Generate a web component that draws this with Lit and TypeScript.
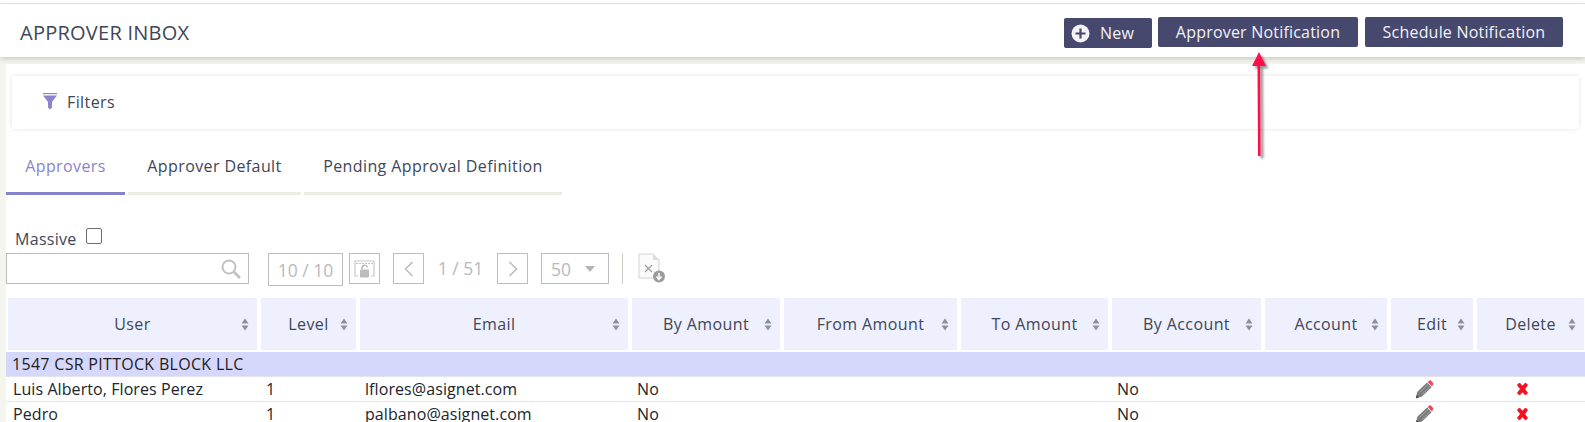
import { LitElement, html, css, svg } from "lit";
import { customElement } from "lit/decorators.js";

const COLS = [
  ["User", 249], ["Level", 95], ["Email", 268], ["By Amount", 148], ["From Amount", 173],
  ["To Amount", 147], ["By Account", 149], ["Account", 122], ["Edit", 82], ["Delete", 107],
] as const;
const ROWS = [
  ["Luis Alberto, Flores Perez", "1", "lflores@asignet.com", "No", "No"],
  ["Pedro", "1", "palbano@asignet.com", "No", "No"],
];

const sortIcon = svg`<svg class="sort" width="8" height="13" viewBox="0 0 8 13"><path d="M4 .5 7.5 5.5H.5zM.5 7.5h7L4 12.5z" fill="#8d8f9c"/></svg>`;
const pencil = svg`<svg width="19" height="19" viewBox="0 0 19 19"><path d="M.8 18.2 2.4 11.8 12 2.6 16.6 7.2 7 16.6z" fill="#7b7b7b"/><path d="M4.5 12.5 13 4.5M7 14.5 15 6.5" stroke="#a8a8a8" stroke-width="1"/><path d="M12.6 1.9 14.2.7c.7-.5 1.4-.4 1.9.1l1.9 1.9c.5.6.5 1.2.1 1.8L17 6.5z" fill="#f0485c"/><path d="M.8 18.2 1.6 15 4 17.4z" fill="#4a4a4a"/></svg>`;
const cross = svg`<svg width="15" height="14" viewBox="0 0 15 14"><path d="M2.5 3 4.5 1 7.5 4.2 10.5 1 12.5 3 9.5 7 12.5 11 10.5 13 7.5 9.8 4.5 13 2.5 11 5.5 7z" fill="#f5101f" stroke="#f5101f" stroke-width="1"/></svg>`;

@customElement("app-root")
export class AppRoot extends LitElement {
  static styles = css`
    :host { display: block; width: 1585px; height: 422px; overflow: hidden; position: relative; background: #f5f5ef; font-family: "Open Sans", "Noto Sans", sans-serif; color: #2b2f3a; }
    * { box-sizing: border-box; }
    .top { height: 4px; background: #fff; border-bottom: 1px solid #e6e6e6; }
    header { height: 53px; background: #fff; display: flex; align-items: flex-start; justify-content: space-between; box-shadow: 0 2px 5px rgba(120,120,105,.35); position: relative; padding: 13px 22px 0 20px; }
    h1 { margin: 2px 0 0; font-size: 20px; line-height: 27px; font-weight: 500; letter-spacing: .25px; color: #3e4659; }
    .actions { display: flex; gap: 6px; align-items: flex-start; }
    .btn { height: 30px; background: #46486d; color: #f2f2f8; border-radius: 2px; font-size: 16px; letter-spacing: .2px; display: flex; align-items: center; justify-content: center; }
    .btn.new { width: 88px; margin-top: 1px; gap: 10px; justify-content: flex-start; padding-left: 7px; }
    .btn.a { width: 200px; }
    .btn.s { width: 198px; margin-left: 1px; }
    main { margin: 7px 0 0 6px; height: 358px; background: #fff; padding-top: 12px; }
    .filters { margin: 0 6px; height: 53px; border-radius: 3px; box-shadow: 0 0 4px rgba(120,120,110,.22); display: flex; align-items: center; gap: 10px; padding: 0 0 2px 31px; font-size: 16px; letter-spacing: .4px; color: #3e4659; }
    .tabs { display: flex; margin-top: 21px; height: 45px; }
    .tab { height: 45px; border-bottom: 3px solid #ecece1; font-size: 16px; font-weight: 500; letter-spacing: .4px; color: #3e4659; padding: 4px 0 0; text-align: center; line-height: 24px; }
    .tab.on { color: #8a84cc; border-bottom-color: #8583cb; width: 119px; margin-right: 3px; }
    .tab.d { width: 173px; margin-right: 3px; }
    .tab.p { width: 258px; }
    .massive { display: flex; align-items: flex-start; height: 25px; padding: 0 0 0 9px; margin-top: 33px; font-size: 16px; letter-spacing: .3px; color: #3e4659; line-height: 22px; gap: 9px; }
    .check { width: 16px; height: 16px; border: 1px solid #6d6d6d; border-radius: 2px; background: #fff; }
    .toolbar { display: flex; align-items: flex-start; height: 45px; }
    .box { border: 1px solid #bdbdbd; height: 31px; display: flex; align-items: center; justify-content: center; color: #b9b9b9; font-size: 17.5px; }
    .search { width: 243px; justify-content: flex-end; padding-right: 5px; }
    .count { width: 75px; height: 33px; margin-left: 19px; }
    .lock { width: 31px; margin-left: 6px; }
    .prev { width: 31px; margin-left: 13px; }
    .next { width: 31px; }
    .page { width: 73px; text-align: center; font-size: 17.5px; color: #b9b9b9; line-height: 31px; }
    .size { width: 68px; margin-left: 13px; justify-content: space-between; padding: 0 13px 0 9px; }
    .sep { width: 1px; height: 31px; background: #cfcfbf; margin-left: 13px; }
    .xls { margin-left: 15px; }
    .grid { display: grid; grid-template-columns: 249px 95px 268px 148px 173px 147px 149px 122px 82px 107px; column-gap: 4px; }
    .head { margin-left: 2px; height: 52px; }
    .th { background: #eef0fd; position: relative; display: flex; align-items: center; justify-content: center; font-size: 16px; font-weight: 500; letter-spacing: .4px; color: #3e4659; }
    .sort { position: absolute; right: 8px; top: 20px; }
    .group { margin-top: 2px; height: 25px; background: #d6d8fb; border-bottom: 1px solid #e3e3ea; font-size: 16px; font-weight: 500; letter-spacing: .3px; color: #1c1c24; padding-left: 6px; line-height: 24px; }
    .row { height: 25px; border-bottom: 1px solid #e6e6e6; font-size: 16px; letter-spacing: .08px; line-height: 24px; color: #22242c; padding-left: 2px; }
    .td { padding-left: 5px; white-space: nowrap; }
    .icon { display: flex; align-items: center; height: 24px; }
    .icon.e { padding-left: 24px; }
    .icon.x { padding-left: 38px; }
    .arrow { position: absolute; left: 1248px; top: 50px; pointer-events: none; overflow: visible; }
  `;

  render() {
    return html`
      <div class="top"></div>
      <header>
        <h1>APPROVER INBOX</h1>
        <div class="actions">
          <div class="btn new">
            <svg width="19" height="19" viewBox="0 0 19 19"><circle cx="9.5" cy="9.5" r="9" fill="#f4f4f8"/><path d="M9.5 4.5v10M4.5 9.5h10" stroke="#46486d" stroke-width="2.2"/></svg>
            <span>New</span>
          </div>
          <div class="btn a">Approver Notification</div>
          <div class="btn s">Schedule Notification</div>
        </div>
      </header>
      <main>
        <div class="filters">
          <svg width="14" height="17" viewBox="0 0 14 17"><path d="M0 0h14v1.2H0z" fill="#8a84cc"/><path d="M0 2.5h14L9 9v5.5L7 16.5 5 14.5V9z" fill="#8a84cc"/></svg>
          <span>Filters</span>
        </div>
        <div class="tabs">
          <div class="tab on">Approvers</div>
          <div class="tab d">Approver Default</div>
          <div class="tab p">Pending Approval Definition</div>
        </div>
        <div class="massive"><span>Massive</span><span class="check"></span></div>
        <div class="toolbar">
          <div class="box search">
            <svg width="24" height="22" viewBox="0 0 24 22"><circle cx="10" cy="9" r="6.5" fill="none" stroke="#c2c2c2" stroke-width="2"/><path d="M15 14l6 6" stroke="#c2c2c2" stroke-width="2.6"/></svg>
          </div>
          <div class="box count">10 / 10</div>
          <div class="box lock">
            <svg width="21" height="18" viewBox="0 0 21 18"><path d="M4 16H1V1h19v15h-3" fill="none" stroke="#c8c8c8" stroke-width="1.2"/><path d="M2 3.5h17" stroke="#c0c0c0" stroke-dasharray="2 1"/><rect x="6" y="9.5" width="9" height="8" rx="1" fill="#bdbdbd"/><path d="M8 9.5V8a2.8 2.8 0 0 1 5.5-.6" fill="none" stroke="#bdbdbd" stroke-width="1.6"/></svg>
          </div>
          <div class="box prev">
            <svg width="10" height="16" viewBox="0 0 10 16"><path d="M8.5 1 1.5 8l7 7" fill="none" stroke="#bdbdbd" stroke-width="1.6"/></svg>
          </div>
          <div class="page">1 / 51</div>
          <div class="box next">
            <svg width="10" height="16" viewBox="0 0 10 16"><path d="M1.5 1l7 7-7 7" fill="none" stroke="#bdbdbd" stroke-width="1.6"/></svg>
          </div>
          <div class="box size">
            <span>50</span>
            <svg width="10" height="6" viewBox="0 0 10 6"><path d="M0 0h10L5 6z" fill="#b5b5b5"/></svg>
          </div>
          <div class="sep"></div>
          <svg class="xls" width="27" height="31" viewBox="0 0 27 31"><path d="M1 1h14l6 6v18H1z" fill="#fafafa" stroke="#d2d2d2"/><path d="M15 1v6h6z" fill="#dedede"/><path d="M7 12l7 7M14 12l-7 7" stroke="#a0a0a0" stroke-width="1.2"/><circle cx="21" cy="23.5" r="6" fill="#9c9c9c"/><path d="M21 20v5M18.5 23.5l2.5 3 2.5-3" stroke="#fff" stroke-width="1.5" fill="none"/></svg>
        </div>
        <div class="grid head">
          ${COLS.map((c) => html`<div class="th">${c[0]}${sortIcon}</div>`)}
        </div>
        <div class="group">1547 CSR PITTOCK BLOCK LLC</div>
        ${ROWS.map((r) => html`
          <div class="row grid">
            <div class="td">${r[0]}</div>
            <div class="td">${r[1]}</div>
            <div class="td">${r[2]}</div>
            <div class="td">${r[3]}</div>
            <div></div><div></div>
            <div class="td">${r[4]}</div>
            <div></div>
            <div class="icon e">${pencil}</div>
            <div class="icon x">${cross}</div>
          </div>`)}
      </main>
      <svg class="arrow" width="30" height="115" viewBox="0 0 30 115">
        <defs><filter id="b" x="-50%" y="-10%" width="200%" height="120%"><feGaussianBlur stdDeviation="1.2"/></filter></defs>
        <path d="M11 2 4 16H9.5L10 106H13L12.5 16H18z" fill="#555" opacity=".6" filter="url(#b)" transform="translate(2.5,2.5)"/>
        <path d="M11 2 4 16H9.5L10 106H12.6L12.2 16H18z" fill="#ff0e47"/>
      </svg>
    `;
  }
}
